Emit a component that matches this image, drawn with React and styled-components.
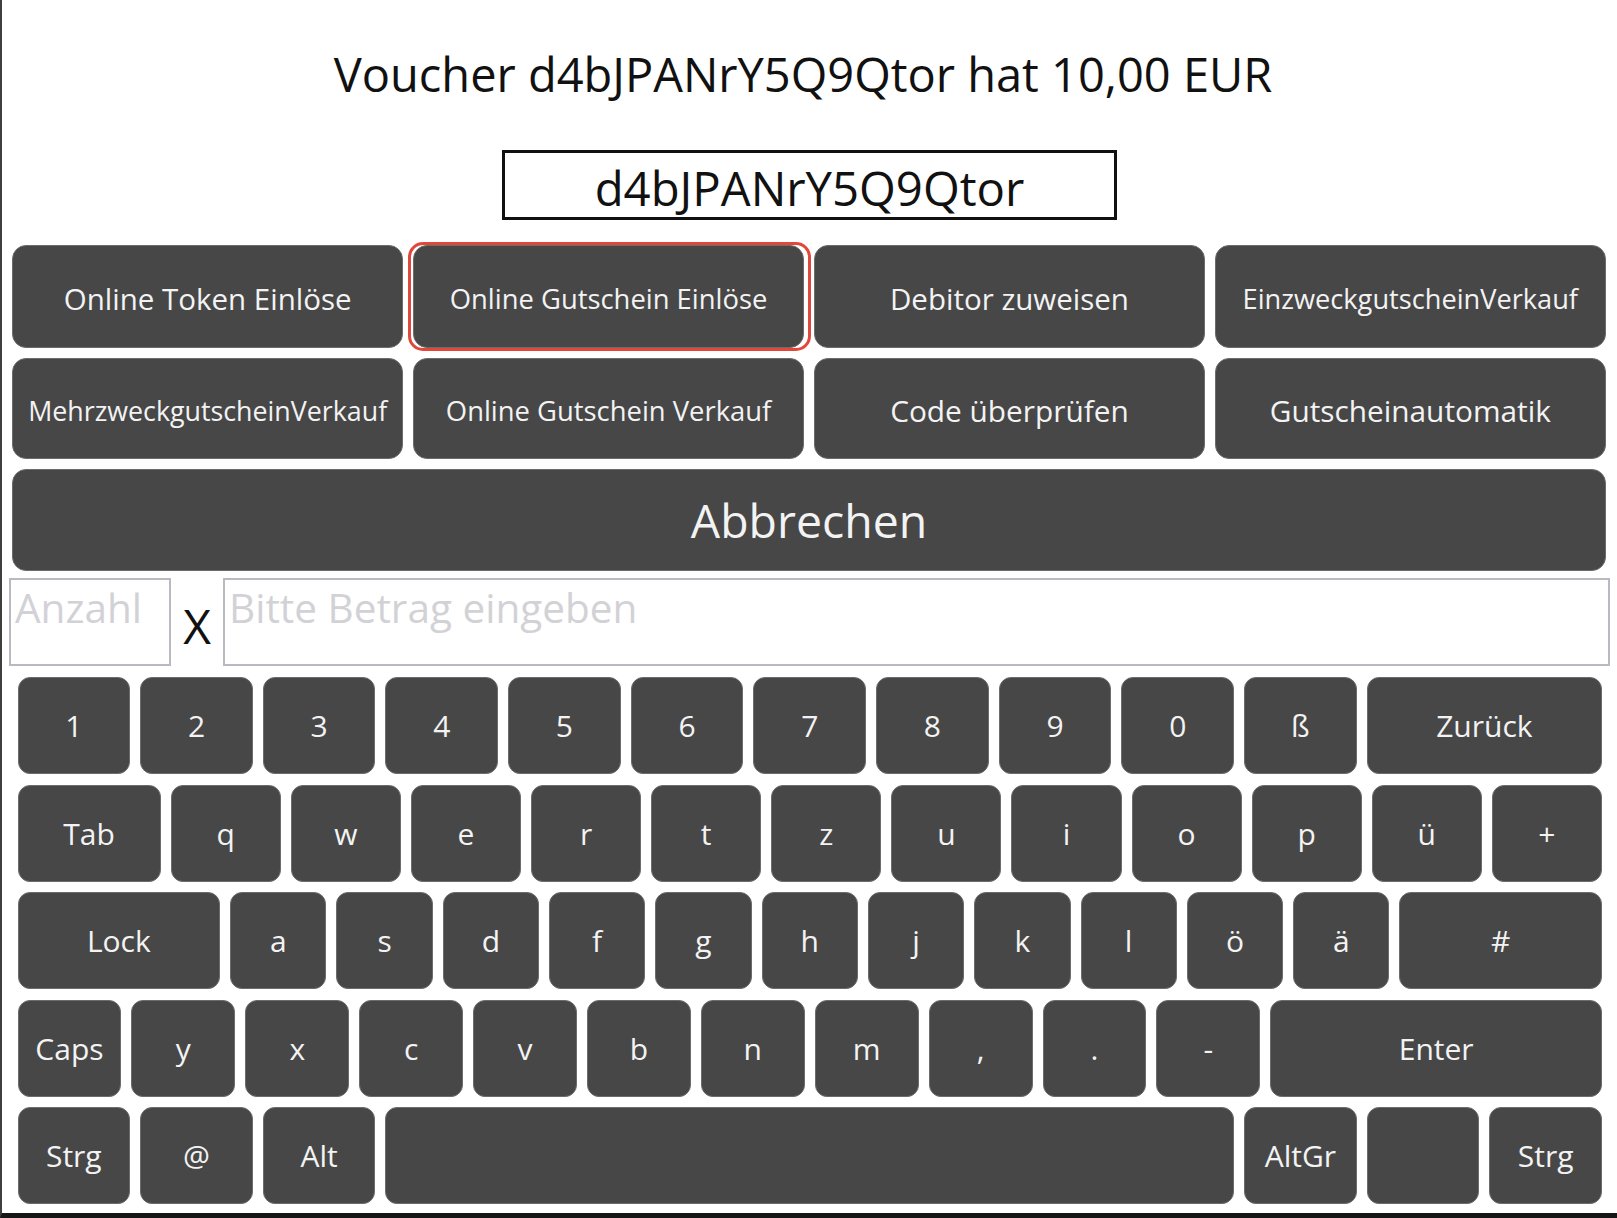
import React from "react";
import styled, { createGlobalStyle, css } from "styled-components";

const GlobalStyle = createGlobalStyle`
  html, body {
    margin: 0;
    padding: 0;
    background: #ffffff;
  }
  body {
    font-family: "Open Sans", "Noto Sans", "DejaVu Sans", sans-serif;
  }
  *, *::before, *::after {
    box-sizing: border-box;
  }
`;

const Frame = styled.div`
  width: 1617px;
  height: 1218px;
  background: #ffffff;
  border-left: 2px solid #3f3f3f;
  border-bottom: 5px solid #161616;
  display: flex;
  flex-direction: column;
  overflow: hidden;
`;

const Title = styled.h1`
  margin: 46px 0 0;
  padding-right: 13px;
  height: 56px;
  line-height: 56px;
  font-size: 47px;
  font-weight: 400;
  text-align: center;
  color: #111111;
`;

const CodeBox = styled.div`
  align-self: center;
  margin-top: 48px;
  width: 615px;
  height: 70px;
  border: 3px solid #111111;
  display: flex;
  align-items: center;
  justify-content: center;
  padding-top: 5px;
  font-size: 47.3px;
  color: #111111;
`;

const ActionGrid = styled.div`
  margin: 25px 11px 0 10px;
  display: grid;
  grid-template-columns: repeat(4, 1fr);
  grid-template-rows: 103px 101px;
  gap: 10px 9.5px;
`;

const darkButton = css`
  background: #474747;
  color: #f3f3f3;
  border: 1px solid #6c6c6c;
  font-family: inherit;
  font-weight: 400;
  padding: 0;
  white-space: nowrap;
  cursor: pointer;
`;

const ActionButton = styled.button`
  ${darkButton};
  position: relative;
  border-radius: 14px;
  font-size: ${(p) => p.$size}px;
  padding-top: 3px;

  ${(p) =>
    p.$focused &&
    css`
      &::after {
        content: "";
        position: absolute;
        top: -4px;
        bottom: -4px;
        left: -6px;
        right: -8px;
        border: 3px solid #e2483a;
        border-radius: 15px;
        pointer-events: none;
      }
    `}
`;

const CancelButton = styled.button`
  ${darkButton};
  margin: 10px 11px 0 10px;
  height: 102px;
  border-radius: 14px;
  font-size: 46.4px;
`;

const InputRow = styled.div`
  display: flex;
  margin: 7px 7px 0 7px;
  height: 88px;
`;

const Field = styled.div`
  ${(p) =>
    p.$grow
      ? css`
          flex: 1;
        `
      : css`
          width: ${p.$width}px;
        `}
  height: 100%;
  border: 2px solid #b9b9c1;
  padding: 0 4px;
  font-size: 40.5px;
  color: #d2d2d6;
  white-space: nowrap;
  overflow: hidden;
`;

const Times = styled.span`
  width: 52px;
  align-self: flex-end;
  margin-bottom: 16px;
  text-align: center;
  font-size: 48px;
  line-height: 1;
  color: #111111;
`;

const Keyboard = styled.div`
  margin: 11px 15px 0 15.5px;
  display: flex;
  flex-direction: column;
  gap: 10.5px;
`;

const KeyRow = styled.div`
  display: grid;
  grid-template-columns: ${(p) => p.$cols};
  gap: 10px;
  height: 97px;
`;

const Key = styled.button`
  ${darkButton};
  grid-column: span ${(p) => p.$span || 1};
  border-radius: 12px;
  font-size: 30px;
`;

const actions = [
  { label: "Online Token Einlöse", size: 29.5 },
  { label: "Online Gutschein Einlöse", size: 27.4, focused: true },
  { label: "Debitor zuweisen", size: 29.5 },
  { label: "EinzweckgutscheinVerkauf", size: 27.2 },
  { label: "MehrzweckgutscheinVerkauf", size: 26.8 },
  { label: "Online Gutschein Verkauf", size: 27.4 },
  { label: "Code überprüfen", size: 29.8 },
  { label: "Gutscheinautomatik", size: 29.8 },
];

const rows = [
  {
    cols: "repeat(13, 1fr)",
    keys: ["1", "2", "3", "4", "5", "6", "7", "8", "9", "0", "ß", { label: "Zurück", span: 2 }],
  },
  {
    cols: "1.3fr repeat(12, 1fr)",
    keys: ["Tab", "q", "w", "e", "r", "t", "z", "u", "i", "o", "p", "ü", "+"],
  },
  {
    cols: "repeat(15, 1fr)",
    keys: [
      { label: "Lock", span: 2 },
      "a", "s", "d", "f", "g", "h", "j", "k", "l", "ö", "ä",
      { label: "#", span: 2 },
    ],
  },
  {
    cols: "repeat(14, 1fr)",
    keys: ["Caps", "y", "x", "c", "v", "b", "n", "m", ",", ".", "-", { label: "Enter", span: 3 }],
  },
  {
    cols: "repeat(13, 1fr)",
    keys: ["Strg", "@", "Alt", { label: "", span: 7 }, "AltGr", "", "Strg"],
  },
];

export default function App() {
  return (
    <>
      <GlobalStyle />
      <Frame>
        <Title>Voucher d4bJPANrY5Q9Qtor hat 10,00 EUR</Title>
        <CodeBox>d4bJPANrY5Q9Qtor</CodeBox>

        <ActionGrid>
          {actions.map((a) => (
            <ActionButton key={a.label} $size={a.size} $focused={a.focused}>
              {a.label}
            </ActionButton>
          ))}
        </ActionGrid>

        <CancelButton>Abbrechen</CancelButton>

        <InputRow>
          <Field $width={162}>Anzahl</Field>
          <Times>X</Times>
          <Field $grow>Bitte Betrag eingeben</Field>
        </InputRow>

        <Keyboard>
          {rows.map((row, ri) => (
            <KeyRow key={ri} $cols={row.cols}>
              {row.keys.map((k, ki) => {
                const key = typeof k === "string" ? { label: k } : k;
                return (
                  <Key key={ki} $span={key.span}>
                    {key.label}
                  </Key>
                );
              })}
            </KeyRow>
          ))}
        </Keyboard>
      </Frame>
    </>
  );
}
